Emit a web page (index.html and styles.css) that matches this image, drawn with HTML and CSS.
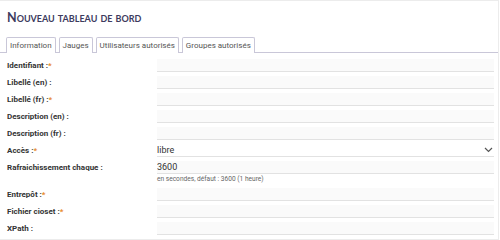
FILE: index.html
```html
<!DOCTYPE html>
<html lang="fr">
<head>
  <meta charset="UTF-8">
  <title>Nouveau tableau de bord</title>
  <link rel="stylesheet" href="styles.css">
</head>
<body>
  <div class="card">
    <h1 class="title">Nouveau tableau de bord</h1>

    <div class="tabs">
      <span class="tab active">Information</span>
      <span class="tab">Jauges</span>
      <span class="tab">Utilisateurs autorisés</span>
      <span class="tab">Groupes autorisés</span>
    </div>

    <form class="form">
      <div class="row">
        <label>Identifiant :<span class="req">*</span></label>
        <input type="text">
      </div>
      <div class="row">
        <label>Libellé (en) :</label>
        <input type="text">
      </div>
      <div class="row">
        <label>Libellé (fr) :<span class="req">*</span></label>
        <input type="text">
      </div>
      <div class="row">
        <label>Description (en) :</label>
        <input type="text">
      </div>
      <div class="row">
        <label>Description (fr) :</label>
        <input type="text">
      </div>
      <div class="row">
        <label>Accès :<span class="req">*</span></label>
        <div class="select">
          <span>libre</span>
          <svg width="9" height="6" viewBox="0 0 9 6"><path d="M1 1l3.5 3.5L8 1" fill="none" stroke="#555" stroke-width="1.2"/></svg>
        </div>
      </div>
      <div class="row">
        <label>Rafraichissement chaque :</label>
        <div class="field">
          <input type="text" value="3600">
          <div class="help">en secondes, défaut : 3600 (1 heure)</div>
        </div>
      </div>
      <div class="row">
        <label>Entrepôt :<span class="req">*</span></label>
        <input type="text">
      </div>
      <div class="row">
        <label>Fichier cioset :<span class="req">*</span></label>
        <input type="text">
      </div>
      <div class="row">
        <label>XPath :</label>
        <input type="text">
      </div>
    </form>
  </div>
</body>
</html>
```

FILE: styles.css
```css
body {
  margin: 0;
  background-color: white;
  font-family: Roboto, Arial, sans-serif;
  color: #333;
}
.card {
  width: 498px;
  height: 238px;
  border-top: 1px solid #ececec;
  border-right: 1px solid #ececec;
  border-bottom: 1px solid #ececec;
  overflow: hidden;
}
.title {
  margin: 0;
  padding: 8px 0 0 7px;
  height: 28px;
  box-sizing: border-box;
  font-family: Lato, Arial, sans-serif;
  font-size: 12.5px;
  line-height: 18px;
  font-weight: bold;
  font-variant: small-caps;
  color: #3d3b5e;
}
.tabs {
  display: flex;
  gap: 3px;
  padding: 8px 0 0 6px;
  border-bottom: 1px solid #c9c7d8;
}
.tab {
  font-size: 8px;
  line-height: 13px;
  padding: 1px 3px 0;
  color: #555;
  border: 1px solid #c9c7d8;
  border-bottom: none;
  border-radius: 2px 2px 0 0;
  margin-bottom: -1px;
  background: white;
}
.tab.active {
  padding-bottom: 1px;
}
.form {
  padding: 6px 4px 0 7px;
}
.row {
  display: flex;
  align-items: flex-start;
  margin-bottom: 4px;
}
.row label {
  width: 150px;
  flex: none;
  font-size: 8px;
  font-weight: bold;
  line-height: 13px;
  color: #333;
}
.req {
  color: #e8892c;
}
.row input,
.field,
.select {
  flex: 1;
}
.row input {
  display: block;
  box-sizing: border-box;
  height: 13px;
  margin: 0;
  padding: 0;
  border: none;
  border-bottom: 1px solid #e2e2e2;
  background: #fafafa;
  font-family: Roboto, Arial, sans-serif;
  font-size: 9px;
  color: #333;
}
.field input {
  width: 100%;
}
.select {
  display: flex;
  justify-content: space-between;
  align-items: center;
  box-sizing: border-box;
  height: 13px;
  padding-right: 1px;
  border-bottom: 1px solid #e2e2e2;
  font-size: 9px;
  color: #333;
}
.help {
  font-size: 6.6px;
  line-height: 9px;
  color: #666;
  padding-top: 1px;
}
```
